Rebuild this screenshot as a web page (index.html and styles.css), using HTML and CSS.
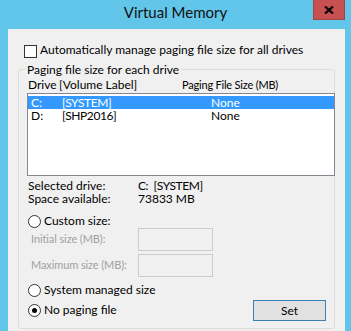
FILE: index.html
```html
<!DOCTYPE html>
<html lang="en">
<head>
  <meta charset="UTF-8">
  <title>Virtual Memory</title>
  <link rel="stylesheet" href="styles.css">
</head>
<body>
  <div class="window">
    <div class="titlebar">
      <span></span>
      <div class="title">Virtual Memory</div>
      <button class="close" title="Close">
        <svg width="10" height="8" viewBox="0 0 10 8"><path d="M1 0.5 L9 7.5 M9 0.5 L1 7.5" stroke="#000" stroke-width="2.2" fill="none"/></svg>
      </button>
    </div>

    <div class="client">
      <label class="check"><span class="box"></span>Automatically manage paging file size for all drives</label>

      <fieldset class="group">
        <legend>Paging file size for each drive</legend>
        <div class="cols">
          <span>Drive</span><span>[Volume Label]</span><span class="caps">Paging File Size (MB)</span>
        </div>
        <ul class="drives">
          <li class="selected"><span>C:</span><span class="caps">[SYSTEM]</span><span>None</span></li>
          <li><span>D:</span><span class="caps">[SHP2016]</span><span>None</span></li>
        </ul>

        <div class="info first"><span class="key">Selected drive:</span><span class="caps">C:&nbsp; [SYSTEM]</span></div>
        <div class="info"><span class="key">Space available:</span><span>73833 MB</span></div>

        <label class="radio custom"><span class="dot"></span>Custom size:</label>
        <div class="field"><span class="name">Initial size (MB):</span><span class="input"></span></div>
        <div class="field"><span class="name">Maximum size (MB):</span><span class="input"></span></div>
        <label class="radio managed"><span class="dot"></span>System managed size</label>
        <div class="last-row">
          <label class="radio"><span class="dot checked"></span>No paging file</label>
          <button class="set">Set</button>
        </div>
      </fieldset>
    </div>
  </div>
</body>
</html>
```

FILE: styles.css
```css
* { box-sizing: border-box; }
body {
  margin: 0;
  font-family: Lato, "Liberation Sans", sans-serif;
  font-size: 12px;
  color: #000;
}
.window {
  width: 351px;
  height: 331px;
  background: #62c6ea;
  display: flex;
  flex-direction: column;
}
.titlebar {
  height: 29px;
  display: grid;
  grid-template-columns: 1fr auto 1fr;
  align-items: start;
}
.title {
  font-size: 15px;
  line-height: 20px;
  padding-top: 2px;
  color: #111;
}
.close {
  justify-self: end;
  margin-right: 6px;
  width: 32px;
  height: 20px;
  padding: 0;
  background: #c75050;
  border: 1px solid #a04545;
  border-top: none;
  display: flex;
  align-items: center;
  justify-content: center;
}
.client {
  flex: 1;
  margin: 0 6px 0 8px;
  background: #f0f0f0;
  padding: 14px 10px 0 10px;
}
.check {
  display: flex;
  align-items: flex-start;
  line-height: 13px;
  margin-left: 6px;
}
.box {
  width: 13px;
  height: 13px;
  margin: 2px 3px 0 0;
  background: #fff;
  border: 1px solid #333;
}
.group {
  margin: 5px 0 0 0;
  min-width: 0;
  padding: 2px 0 7px 8px;
  border: 1px solid #dcdcdc;
  border-radius: 3px;
}
.group legend {
  line-height: 13px;
  padding: 0 2px;
  margin-left: -2px;
}
/* Lato's capitals run wider than the dialog font */
.caps { letter-spacing: -0.4px; }
.cols {
  display: grid;
  grid-template-columns: 31px 123px auto;
  line-height: 13px;
  padding-left: 1px;
  margin-bottom: 2px;
}
.cols .caps {
  font-size: 11px;
  letter-spacing: -0.2px;
}
.drives {
  list-style: none;
  margin: 0 -1px 0 0;
  padding: 2px 0 0 0;
  height: 83px;
  background: #fff;
  border: 1px solid #828790;
}
.drives li {
  display: grid;
  grid-template-columns: 31px 149px auto;
  line-height: 13px;
  padding-left: 3px;
}
.drives li.selected {
  background: #3399ff;
  color: #fff;
}
.info {
  display: grid;
  grid-template-columns: 110px auto;
  line-height: 13px;
  padding-left: 1px;
}
.info.first { margin-top: 3px; }
.radio {
  display: flex;
  align-items: flex-start;
  line-height: 13px;
  padding-left: 1px;
}
.radio.custom { margin-top: 9px; }
.radio.managed { margin-top: 6px; }
.dot {
  width: 13px;
  height: 13px;
  margin: 1px 3px 0 0;
  border: 1px solid #333;
  border-radius: 50%;
  background: #fff;
  display: flex;
  align-items: center;
  justify-content: center;
}
.dot.checked::after {
  content: "";
  width: 5px;
  height: 5px;
  border-radius: 50%;
  background: #000;
}
.field {
  display: flex;
  align-items: center;
  height: 23px;
  padding-left: 4px;
  color: #a0a0a0;
}
.field + .field { margin-top: 3px; }
.field .name {
  width: 107px;
  font-size: 11px;
  letter-spacing: -0.1px;
  line-height: 13px;
  padding-bottom: 2px;
}
.input {
  width: 75px;
  height: 23px;
  border: 1px solid #cccccc;
}
.last-row {
  display: flex;
  justify-content: space-between;
  align-items: flex-start;
  margin-top: 3px;
}
.last-row .radio { margin-top: 3px; }
.set {
  width: 73px;
  height: 21px;
  margin-right: 8px;
  padding: 0;
  font-family: inherit;
  font-size: 12px;
  background: #e1e1e1;
  border: 1px solid #3c7fb1;
}
```
